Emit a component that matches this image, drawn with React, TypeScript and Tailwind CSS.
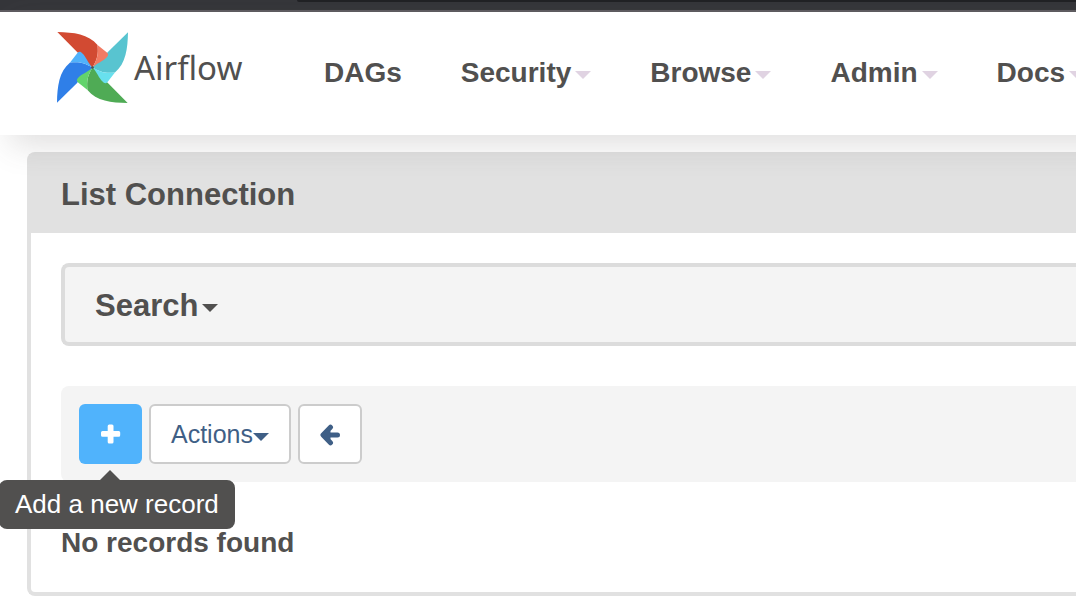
import React from "react";

function Caret({ className }: { className: string }) {
  return (
    <svg viewBox="0 0 16 8" className={`h-2 w-4 shrink-0 ${className}`} fill="currentColor" aria-hidden="true">
      <path d="M0 0h16L8 8z" />
    </svg>
  );
}

function PlusIcon() {
  return (
    <svg viewBox="0 0 20 20" className="h-5 w-5" fill="currentColor" aria-hidden="true">
      <path d="M8.2 0.5h2.8q1.5 0 1.5 1.5v5h5.2q1.5 0 1.5 1.5v2.8q0 1.5-1.5 1.5h-5.2v5.2q0 1.5-1.5 1.5h-2.8q-1.5 0-1.5-1.5v-5.2H1.5q-1.5 0-1.5-1.5v-2.8q0-1.5 1.5-1.5h5.2V2q0-1.5 1.5-1.5z" />
    </svg>
  );
}

function ArrowIcon() {
  return (
    <svg viewBox="0 0 22 22" className="h-[22px] w-[22px]" fill="none" stroke="currentColor" strokeWidth="5" strokeLinecap="round" strokeLinejoin="round" aria-hidden="true">
      <path d="M11.5 3.2L4 11l7.5 7.8M5.5 11h13" />
      <path d="M5 11l5-3.5v7z" strokeWidth="3" fill="currentColor" />
    </svg>
  );
}

const blades = [
  { angle: 0, large: "#d24a32", small: "#f27b63" },
  { angle: 90, large: "#58c4d0", small: "#68e0ee" },
  { angle: 180, large: "#4fab55", small: "#62d46c" },
  { angle: 270, large: "#2f7fe8", small: "#50b2fb" },
];

function Pinwheel() {
  return (
    <svg viewBox="0 0 212 212" className="h-[71px] w-[71px] shrink-0" aria-hidden="true">
      {blades.map((b) => (
        <g key={b.angle} transform={`rotate(${b.angle} 106 106)`}>
          <path fill={b.large} d="M1 0C50 1 94 6 121 39C124 68 120 82 106 106C92 96 84 92 76 82C67 69 67 66 60 60Z" />
        </g>
      ))}
      {blades.map((b) => (
        <g key={b.angle} transform={`rotate(${b.angle} 106 106)`}>
          <path fill={b.small} d="M121 39L149 61C155 66 153 71 148 76C138 87 120 92 106 106C120 82 124 68 121 39Z" />
        </g>
      ))}
      <circle cx="106" cy="106" r="4" fill="#51504f" />
    </svg>
  );
}

const menus = [
  { label: "DAGs", caret: false },
  { label: "Security", caret: true },
  { label: "Browse", caret: true },
  { label: "Admin", caret: true },
  { label: "Docs", caret: true },
];

export default function App() {
  return (
    <div className="overflow-hidden bg-white pb-4 font-['Liberation_Sans',Arial,sans-serif] text-[#51504f]">
      <div className="h-3 border-b-2 border-[#5f5c61] bg-[#35363a]">
        <div className="ml-[297px] h-0.5 rounded-bl-sm bg-[#202124]" />
      </div>
      <header className="relative -mr-12 flex h-[123px] items-center bg-white pl-[57px] shadow-[10px_10px_30px_rgba(81,80,79,0.18)]">
        <a href="#home" className="mb-3 flex w-[208px] shrink-0 items-center gap-1.5">
          <Pinwheel />
          <span className="font-['Noto_Sans',sans-serif] text-[33px] leading-10">Airflow</span>
        </a>
        <nav className="mb-0.5 flex gap-[59px] pl-[59px]">
          {menus.map((m) => (
            <a key={m.label} href="#menu" className="flex items-center gap-1 text-[28px] leading-8 font-bold">
              {m.label}
              {m.caret && <Caret className="mt-1 text-[#e0d3e2]" />}
            </a>
          ))}
        </nav>
      </header>
      <main className="pt-[17px] pl-[27px]">
        <section className="rounded-l-lg border-4 border-r-0 border-[#e1e1e1]">
          <h1 className="bg-[#e1e1e1] pt-[19px] pb-[18px] pl-[30px] text-[31px] leading-10 font-bold">List Connection</h1>
          <div className="pt-[30px] pb-8 pl-[30px]">
            <button
              type="button"
              className="flex h-[83px] w-full items-center gap-1 rounded-l-lg border-4 border-r-0 border-[#dcdcdc] bg-[#f4f4f4] pt-0.5 pl-[30px] text-[31px] leading-10 font-bold"
            >
              Search
              <Caret className="mt-1" />
            </button>
            <div className="mt-10 flex gap-[7px] rounded-l-lg bg-[#f4f4f4] p-[18px] text-[#3f5f86]">
              <div className="relative">
                <button
                  type="button"
                  aria-label="Add"
                  aria-describedby="add-tip"
                  className="flex h-[60px] w-[63px] items-center justify-center rounded-md bg-[#50b3fc] text-white"
                >
                  <PlusIcon />
                </button>
                <div id="add-tip" role="tooltip" className="absolute top-full -left-20 z-10 pt-4 text-[26px] text-white">
                  <svg viewBox="0 0 20 10" className="absolute top-1.5 left-[101px] h-2.5 w-5" fill="#51504f" aria-hidden="true">
                    <path d="M0 10L10 0L20 10z" />
                  </svg>
                  <div className="rounded-lg bg-[#51504f] px-4 py-2 leading-[33px] whitespace-nowrap">Add a new record</div>
                </div>
              </div>
              <button
                type="button"
                className="flex h-[60px] items-center rounded-md border-2 border-[#cccccc] bg-white px-5 pt-0.5 text-[25px]"
              >
                Actions
                <Caret className="mt-1" />
              </button>
              <button
                type="button"
                aria-label="Back"
                className="flex h-[60px] w-16 items-center justify-center rounded-md border-2 border-[#cccccc] bg-white pt-0.5"
              >
                <ArrowIcon />
              </button>
            </div>
            <p className="mt-11 text-[28px] leading-[34px] font-bold">No records found</p>
          </div>
        </section>
      </main>
    </div>
  );
}
